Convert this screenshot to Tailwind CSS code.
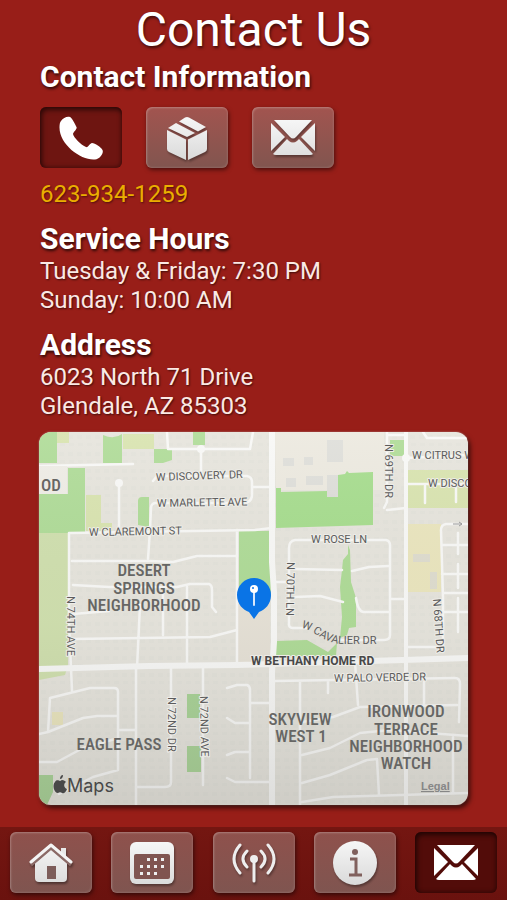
<!DOCTYPE html>
<html lang="en">
<head>
    <meta charset="UTF-8">
    <meta name="viewport" content="width=device-width, initial-scale=1.0">
    <title>Contact Us</title>
    <script src="https://cdn.jsdelivr.net/npm/@tailwindcss/browser@4"></script>
</head>
<body class="flex min-h-screen flex-col bg-[#981e18] font-['Roboto',sans-serif] text-white">
    <!-- shared icon shapes -->
    <svg class="absolute h-0 w-0" aria-hidden="true">
        <defs>
            <linearGradient id="silver" x1="0" y1="0" x2="0" y2="44" gradientUnits="userSpaceOnUse">
                <stop offset="0" stop-color="#f6f6f6"/>
                <stop offset="1" stop-color="#dadada"/>
            </linearGradient>
        </defs>
        <symbol id="icon-envelope" viewBox="0 0 44 36">
            <path d="M3 0H41L25 17Q22 20 19 17Z"/>
            <path d="M0 3L14 17L0 31Z"/>
            <path d="M44 3L30 17L44 31Z"/>
            <path d="M2 34L16 19L18 21Q22 24 26 21L28 19L42 34Q41 35 39 35H5Q3 35 2 34Z"/>
        </symbol>
    </svg>

    <main class="flex-1 px-10 pb-[22px]">
        <h1 class="pt-1 text-center text-5xl leading-[52px] text-shadow-[1px_2px_3px_rgb(0_0_0/0.6)]">Contact Us</h1>

        <section>
            <h2 class="pt-[3px] text-3xl leading-9 font-bold text-shadow-[1px_2px_3px_rgb(0_0_0/0.7)]">Contact Information</h2>
            <div class="flex gap-6 pt-3">
                <button type="button" aria-label="Phone" class="flex h-[61px] w-[82px] items-center justify-center rounded-md bg-[#6e1511] shadow-[inset_2px_3px_5px_rgb(0_0_0/0.55),inset_-1px_-1px_4px_rgb(0_0_0/0.35)]">
                    <svg class="h-11 w-11" viewBox="0 0 44 44" fill="#fff">
                        <path d="M2 5C4 2 8 0 11 1C13 2 16 8 17.500 11C18.500 13 14 16 14 18C15 22 22 29 27 31C29 32 31 27 33 27C36 27 42 31 43.500 34C45 37 41 43 36 43.500C23 45 0 29 .5 11C.5 8 1 6 2 5Z"/>
                    </svg>
                </button>
                <button type="button" aria-label="Mailing address" class="flex h-[61px] w-[82px] items-center justify-center rounded-md bg-linear-to-b from-[#a2544f] to-[#81554f] shadow-[1px_2px_4px_rgb(0_0_0/0.5),inset_1px_1px_2px_rgb(255_255_255/0.25),inset_-1px_-1px_2px_rgb(255_255_255/0.1)]">
                    <svg class="h-11 w-[42px] drop-shadow-[1px_2px_1px_rgb(0_0_0/0.35)]" viewBox="0 0 42 44" fill="url(#silver)">
                        <path d="M1 14L20 23.500V44L3 36Q1 35 1 33Z"/>
                        <path d="M41 14L22 23.500V44L39 36Q41 35 41 33Z"/>
                        <path d="M2 12L10 7L29 17L21 21Z"/>
                        <path d="M13 5.500L19 1.500Q21 .5 23 1.500L40 11L32 15.500Z"/>
                    </svg>
                </button>
                <button type="button" aria-label="Email" class="flex h-[61px] w-[82px] items-center justify-center rounded-md bg-linear-to-b from-[#a2544f] to-[#81554f] shadow-[1px_2px_4px_rgb(0_0_0/0.5),inset_1px_1px_2px_rgb(255_255_255/0.25),inset_-1px_-1px_2px_rgb(255_255_255/0.1)]">
                    <svg class="h-9 w-11 drop-shadow-[1px_2px_1px_rgb(0_0_0/0.35)]" fill="url(#silver)"><use href="#icon-envelope"/></svg>
                </button>
            </div>
            <a href="tel:6239341259" class="mt-3 block text-2xl leading-[29px] text-[#eaae00] text-shadow-[1px_1px_2px_rgb(0_0_0/0.5)]">623-934-1259</a>
        </section>

        <section class="pt-3">
            <h2 class="text-3xl leading-9 font-bold text-shadow-[1px_2px_3px_rgb(0_0_0/0.7)]">Service Hours</h2>
            <p class="text-2xl leading-[29px] text-[#fbe9e4] text-shadow-[1px_1px_2px_rgb(0_0_0/0.6)]">Tuesday &amp; Friday: 7:30 PM<br>Sunday: 10:00 AM</p>
        </section>

        <section class="pt-3">
            <h2 class="text-3xl leading-9 font-bold text-shadow-[1px_2px_3px_rgb(0_0_0/0.7)]">Address</h2>
            <p class="text-2xl leading-[29px] text-[#fbe9e4] text-shadow-[1px_1px_2px_rgb(0_0_0/0.6)]">6023 North 71 Drive<br>Glendale, AZ 85303</p>

            <div class="-mx-px mt-[11px] overflow-hidden rounded-xl shadow-[2px_3px_5px_rgb(0_0_0/0.65),0_0_2px_rgb(255_255_255/0.5)]">
                <svg class="block w-full" viewBox="0 0 429 373" role="img" aria-label="Map of Glendale">
                    <defs>
                        <linearGradient id="shade" x1="0" y1="0" x2="0" y2="1">
                            <stop offset="0" stop-color="#fff" stop-opacity="0.1"/>
                            <stop offset="0.5" stop-color="#888" stop-opacity="0.04"/>
                            <stop offset="1" stop-color="#555" stop-opacity="0.16"/>
                        </linearGradient>
                        <pattern id="houses" width="9" height="17" patternUnits="userSpaceOnUse">
                            <path d="M2 3h5v4H2zM3 11h5v3H3z" fill="#dcdad2" opacity="0.25"/>
                        </pattern>
                        <path id="cavalier" d="M262 196C276 198 284 212 306 212H350"/>
                    </defs>
                    <rect width="429" height="373" fill="#e6e4dc"/>
                    <rect width="429" height="373" fill="url(#houses)"/>
                    <path d="M236 0H345V58H237Z" fill="#ece9df"/>
                    <path d="M198 125H231V232H198Z" fill="#e6e1d6"/>

                    <!-- parks -->
                    <g fill="#aedb96">
                        <path d="M0 0H18V31H0ZM29 36H46V101H0V62H29ZM64 3Q75 8 83 2V31H64ZM115 17H133V28L124 31H115ZM99 69Q99 65 103 65H110V95L99 93ZM154 0H166V13H154Z"/>
                        <path d="M200 99H230L231 118L233 130V165H200Z"/>
                        <path d="M237 56H242V60L288 59V65H299V43L306 42L308 39L310 41L334 40V93L237 96Z" fill="#a5dc8c"/>
                        <path d="M351 8H365V24H351Z"/>
                        <path d="M309 113L311 118L312 150L317 166V195L310 196L308 203L301 206L303 185L301 155L303 138L304 128L309 122Z"/>
                        <path d="M237 209L268 208L289 220L298 211L297 224H237Z"/>
                        <path d="M148 262H161V286H148ZM148 314H162V340H148ZM0 343H14V360L8 373H0Z" fill="#a8d295"/>
                    </g>
                    <g fill="#d8e3ae">
                        <path d="M18 0H30V11H18ZM47 63H62V91H73V99H47ZM84 2H115V17H84Z"/>
                        <path d="M0 101H29V233L26 243L0 248Z" fill="#cfdfad"/>
                        <path d="M369 38H429V76H369Z"/>
                        <path d="M369 92H402V160H369ZM13 280H24V293H13Z" fill="#eae5bd"/>
                    </g>
                    <g fill="#d9d9d5" opacity="0.7">
                        <path d="M288 43H299V65H288ZM288 8H304V30H288ZM244 26H255V34H244ZM265 25H274V33H265ZM247 46H257V55H247ZM267 44H284V53H267ZM374 122H391V130H374ZM391 140H398V157H391Z"/>
                    </g>

                    <!-- streets -->
                    <g fill="none" stroke="#f8f8f6" stroke-width="2.500" stroke-linecap="round" stroke-linejoin="round">
                        <path d="M128 0L129 17H211L214 0M162 17V43M0 34L94 32M80 51V99M114 49L118 44H208Q213 45 213 50V64Q212 71 204 71H116Q112 72 112 76L111 98L109 127M213 55H233"/>
                        <path d="M30 101L216 98L233 96M30 101V190L32 236L33 259M33 129H111L134 130L158 124H198M198 98V233M34 153L70 155H138L151 152H170Q173 153 173 158V175L177 180M148 155V232M124 160V203M101 173L98 236M34 182L70 179M34 207L171 205L198 198"/>
                        <path d="M9 300L11 266L51 256H75Q79 256 79 260V338L54 345L20 362M0 302L9 300L44 286L58 284H79M0 330H18L44 316L76 307M79 298H97M97 236V373M132 236V350Q132 355 126 355H97M164 236V353"/>
                        <path d="M188 256L198 253H208Q211 254 211 258V346M188 286L196 291H211M188 323L196 320H211M188 346L196 350H230M211 271H230"/>
                        <path d="M250 190V116Q250 109 256 108H347Q351 109 351 113V203Q351 208 345 208H300M250 190Q249 196 254 196H268M256 137L303 138M313 139L330 135L349 134M256 165L281 164L304 170M317 166Q319 180 325 180H349M237 150H250M351 167H367"/>
                        <path d="M348 0V70L345 76M348 78L367 76M348 3H367M384 0L388 6H429M367 26L429 23M369 52H429M386 54V71M417 54V70M429 92H407Q402 93 402 98L404 166V220M403 113H429M403 142H429M404 161H429M404 180H429M419 101V122M419 132V156M419 166V200M367 215H404"/>
                        <path d="M236 249L416 246Q421 246 421 252L420 290M289 249V261M261 249V373M316 230L319 273M263 323L291 316L321 301L351 298L429 304M263 290L294 285L321 275L418 273M263 351L291 343L328 328L338 327L340 363M263 370L294 365L429 361M414 305V361M385 250V272"/>
                        <path d="M367 0V373" stroke-width="4"/>
                        <path d="M0 237L110 234L198 233L429 226M233 0V130L235 160V210L233 240V373" stroke-width="6"/>
                    </g>
                    <g fill="#f8f8f6">
                        <circle cx="80" cy="51" r="4"/>
                        <circle cx="162" cy="17" r="4"/>
                        <circle cx="367" cy="26" r="4"/>
                        <path d="M0 34H28V62H0Z" fill="#eeece5"/>
                    </g>
                    <rect width="429" height="373" fill="url(#shade)"/>

                    <!-- street names -->
                    <g class="font-['Roboto',sans-serif] text-[11px]" fill="#5c5c5c" stroke="#eeede8" stroke-width="2" paint-order="stroke" stroke-linejoin="round">
                        <text transform="translate(117 49) rotate(-2)">W DISCOVERY DR</text>
                        <text transform="translate(118 75) rotate(-1)">W MARLETTE AVE</text>
                        <text transform="translate(50 104) rotate(-1)">W CLAREMONT ST</text>
                        <text x="272" y="111">W ROSE LN</text>
                        <text x="373" y="27">W CITRUS W</text>
                        <text x="389" y="55">W DISCO</text>
                        <text transform="translate(295 250) rotate(-1)">W PALO VERDE DR</text>
                        <text transform="translate(28 164) rotate(90)">N 74TH AVE</text>
                        <text transform="translate(346 12) rotate(90)">N 69TH DR</text>
                        <text transform="translate(248 130) rotate(91)">N 70TH LN</text>
                        <text transform="translate(394 167) rotate(86)">N 68TH DR</text>
                        <text transform="translate(129 265) rotate(90)">N 72ND DR</text>
                        <text transform="translate(161 264) rotate(89)">N 72ND AVE</text>
                        <text stroke="none"><textPath href="#cavalier">W CAVALIER DR</textPath></text>
                        <text class="text-[12px] font-bold" x="212" y="233" fill="#484848">W BETHANY HOME RD</text>
                    </g>
                    <path d="M414 92H423M420 90L423 92L420 94" fill="none" stroke="#999" stroke-width="1"/>

                    <!-- neighborhoods -->
                    <g class="font-['Roboto_Condensed','Roboto',sans-serif] text-[17px] font-medium" fill="#666664" text-anchor="middle">
                        <text x="105" y="144">DESERT</text>
                        <text x="105" y="162">SPRINGS</text>
                        <text x="105" y="179">NEIGHBORHOOD</text>
                        <text x="12" y="59">OD</text>
                        <text x="80" y="318">EAGLE PASS</text>
                        <text x="261" y="293">SKYVIEW</text>
                        <text x="262" y="310">WEST 1</text>
                        <text x="367" y="285">IRONWOOD</text>
                        <text x="367" y="303">TERRACE</text>
                        <text x="367" y="320">NEIGHBORHOOD</text>
                        <text x="367" y="337">WATCH</text>
                    </g>

                    <!-- pin -->
                    <path d="M215 146A17 17 0 0 1 232 163C232 172 226 178 220 180L215 187L210 180C204 178 198 172 198 163A17 17 0 0 1 215 146Z" fill="#0a74e6"/>
                    <path d="M215 160V173" stroke="#d9e8fb" stroke-width="2" stroke-linecap="round"/>
                    <circle cx="215" cy="157" r="4" fill="#fff"/>
                    <circle cx="214" cy="156" r="1" fill="#0a74e6"/>

                    <g fill="#484848">
                        <path d="M23 348C25 348 26 349 27 350C24 352 25 356 28 357C27 360 25 362 23 361C22 360 20 360 19 361C15 361 13 353 16 350C18 347 20 349 21 349C22 349 22 348 23 348ZM21 347C21 345 22 343 24 343C24 345 23 347 21 347Z"/>
                        <text class="font-['Inter','Roboto',sans-serif] text-[18px]" x="28" y="360">Maps</text>
                    </g>
                    <a href="#legal"><text class="font-['Liberation_Sans',sans-serif] text-[11px] font-bold underline" x="382" y="358" fill="#868686">Legal</text></a>
                </svg>
            </div>
        </section>
    </main>

    <nav class="flex items-start justify-between bg-linear-to-b from-[#741611] to-[#6a120e] px-[10px] pt-[5px] pb-[7px]">
        <a href="#home" aria-label="Home" class="flex h-[61px] w-[82px] items-center justify-center rounded-md bg-linear-to-b from-[#8f514c] to-[#7f5550] shadow-[1px_2px_4px_rgb(0_0_0/0.5),inset_1px_1px_2px_rgb(255_255_255/0.25),inset_-1px_-1px_2px_rgb(255_255_255/0.1)]">
            <svg class="h-10 w-11 drop-shadow-[1px_2px_1px_rgb(0_0_0/0.4)]" viewBox="0 0 44 40">
                <path d="M32 5H37V16L32 11Z" fill="#e8e8e8"/>
                <path d="M6 20L22 6L38 20V35Q38 39 34 39H10Q6 39 6 35Z" fill="url(#silver)"/>
                <path d="M2 22L22 5L42 22" fill="none" stroke="#8b6a67" stroke-width="3"/>
                <path d="M2 19L22 2L42 19" fill="none" stroke="#f4f4f4" stroke-width="3" stroke-linecap="round" stroke-linejoin="round"/>
                <path d="M18 23H27V36H18Z" fill="#7d5d5a"/>
            </svg>
        </a>
        <a href="#calendar" aria-label="Calendar" class="flex h-[61px] w-[82px] items-center justify-center rounded-md bg-linear-to-b from-[#8f514c] to-[#7f5550] shadow-[1px_2px_4px_rgb(0_0_0/0.5),inset_1px_1px_2px_rgb(255_255_255/0.25),inset_-1px_-1px_2px_rgb(255_255_255/0.1)]">
            <svg class="h-[42px] w-11 drop-shadow-[1px_2px_1px_rgb(0_0_0/0.35)]" viewBox="0 0 44 42">
                <rect width="44" height="42" rx="6" fill="url(#silver)"/>
                <rect x="4" y="12" width="36" height="25" rx="2" fill="#805450"/>
                <path d="M17 16h3v3h-3zM24 16h3v3h-3zM31 16h3v3h-3zM10 23h3v3h-3zM17 23h3v3h-3zM24 23h3v3h-3zM31 23h3v3h-3zM10 30h3v3h-3zM17 30h3v3h-3zM24 30h3v3h-3z" fill="#eee"/>
            </svg>
        </a>
        <a href="#broadcast" aria-label="Broadcast" class="flex h-[61px] w-[82px] items-center justify-center rounded-md bg-linear-to-b from-[#8f514c] to-[#7f5550] shadow-[1px_2px_4px_rgb(0_0_0/0.5),inset_1px_1px_2px_rgb(255_255_255/0.25),inset_-1px_-1px_2px_rgb(255_255_255/0.1)]">
            <svg class="h-10 w-11 drop-shadow-[1px_2px_1px_rgb(0_0_0/0.35)]" viewBox="0 0 44 40" fill="none" stroke="#eee" stroke-width="3" stroke-linecap="round">
                <path d="M8 2Q-4 16 8 30M15 8Q7 16 15 24M36 2Q48 16 36 30M29 8Q37 16 29 24M22 16V38"/>
                <circle cx="22" cy="16" r="3" fill="#eee" stroke-width="2"/>
            </svg>
        </a>
        <a href="#info" aria-label="Information" class="flex h-[61px] w-[82px] items-center justify-center rounded-md bg-linear-to-b from-[#8f514c] to-[#7f5550] shadow-[1px_2px_4px_rgb(0_0_0/0.5),inset_1px_1px_2px_rgb(255_255_255/0.25),inset_-1px_-1px_2px_rgb(255_255_255/0.1)]">
            <svg class="h-11 w-11 drop-shadow-[1px_2px_1px_rgb(0_0_0/0.35)]" viewBox="0 0 44 44">
                <circle cx="22" cy="22" r="22" fill="url(#silver)"/>
                <circle cx="22" cy="11" r="3" fill="#80605d"/>
                <path d="M17 18H23V33M16 34H29" fill="none" stroke="#80605d" stroke-width="3"/>
            </svg>
        </a>
        <a href="#contact" aria-label="Contact" aria-current="page" class="flex h-[61px] w-[82px] items-center justify-center rounded-md bg-[#520c09] shadow-[inset_2px_3px_5px_rgb(0_0_0/0.55),inset_-1px_-1px_4px_rgb(0_0_0/0.35)]">
            <svg class="h-9 w-11" fill="#fff"><use href="#icon-envelope"/></svg>
        </a>
    </nav>
</body>
</html>
